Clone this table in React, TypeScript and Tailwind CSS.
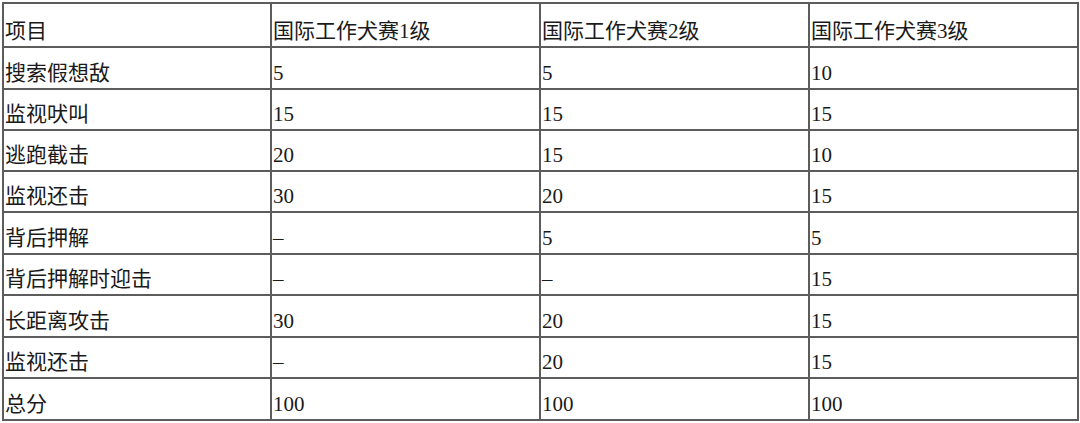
const header = ["项目", "国际工作犬赛1级", "国际工作犬赛2级", "国际工作犬赛3级"];

const rows: string[][] = [
  ["搜索假想敌", "5", "5", "10"],
  ["监视吠叫", "15", "15", "15"],
  ["逃跑截击", "20", "15", "10"],
  ["监视还击", "30", "20", "15"],
  ["背后押解", "–", "5", "5"],
  ["背后押解时迎击", "–", "–", "15"],
  ["长距离攻击", "30", "20", "15"],
  ["监视还击", "–", "20", "15"],
  ["总分", "100", "100", "100"],
];

const heights = ["h-[42px]", "h-[41px]", "h-[41px]", "h-[41px]", "h-[42px]", "h-[41px]", "h-[42px]", "h-[41px]", "h-[42px]"];

const cell = "border-2 border-[#5c5c5c] align-bottom pl-[1px] pr-0 pt-0 pb-[4px] text-left font-normal leading-[21px]";

export default function App() {
  return (
    <div className="w-[1080px] h-[423px] bg-white pt-[2px] pl-[2px] text-[21px] text-[#1a1a1a] font-['Liberation_Serif','Noto_Sans_CJK_SC',serif]">
      <table className="border-collapse table-fixed w-[1075px]">
        <colgroup>
          <col className="w-[268px]" />
          <col className="w-[269px]" />
          <col className="w-[269px]" />
          <col className="w-[269px]" />
        </colgroup>
        <thead>
          <tr className="h-[44px]">
            {header.map((h, i) => (
              <th key={i} className={cell}>
                {h}
              </th>
            ))}
          </tr>
        </thead>
        <tbody>
          {rows.map((r, ri) => (
            <tr key={ri} className={heights[ri]}>
              {r.map((c, ci) => (
                <td key={ci} className={cell}>
                  {c}
                </td>
              ))}
            </tr>
          ))}
        </tbody>
      </table>
    </div>
  );
}
